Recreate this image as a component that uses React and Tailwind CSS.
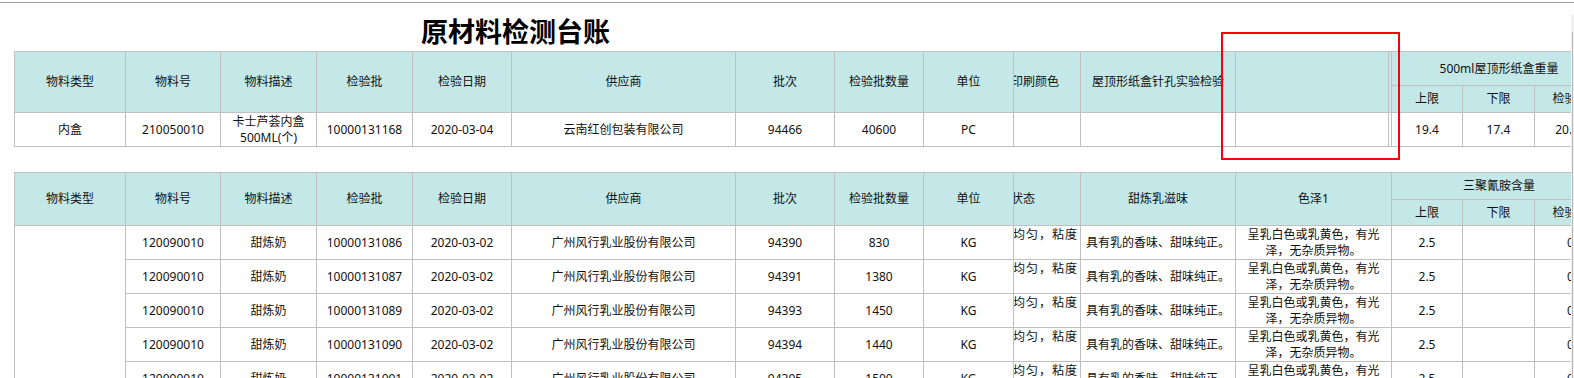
import React from "react";

const B = "border border-[#c0c0c0]";
const TH = `${B} bg-[#c4e8e8] font-normal text-center align-middle px-[4px]`;
const TD = `${B} bg-white text-center align-middle px-[4px]`;

const cols1 = ["w-[111px]", "w-[95px]", "w-[96px]", "w-[96px]", "w-[99px]", "w-[224px]", "w-[99px]", "w-[89px]", "w-[90px]", "w-[67px]", "w-[155px]", "w-[153px]", "w-[3px]", "w-[71px]", "w-[72px]", "w-[72px]"];
const cols2 = ["w-[111px]", "w-[95px]", "w-[96px]", "w-[96px]", "w-[99px]", "w-[224px]", "w-[99px]", "w-[89px]", "w-[90px]", "w-[67px]", "w-[155px]", "w-[156px]", "w-[71px]", "w-[72px]", "w-[72px]"];

const rows2 = [
  ["10000131086", "94390", "830"],
  ["10000131087", "94391", "1380"],
  ["10000131089", "94393", "1450"],
  ["10000131090", "94394", "1440"],
  ["10000131091", "94395", "1500"],
];

export default function App() {
  return (
    <div className="relative w-[1574px] h-[378px] overflow-hidden bg-white text-[12px] leading-[16px] text-[#111] font-['Noto_Sans','Noto_Sans_CJK_SC',sans-serif]">
      <div className="mt-[2px] border-t border-[#9f9f9f]" />
      <div className="w-[1571px] overflow-hidden">
        <div className="pt-[11px] mb-[3px] pl-[421px] text-[27px] leading-[34px] font-bold text-black whitespace-nowrap font-['Noto_Sans_CJK_SC',sans-serif]">
          原材料检测台账
        </div>

        <table className="ml-[14px] table-fixed border-collapse w-[1592px]">
          <colgroup>
            {cols1.map((c, i) => (
              <col key={i} className={c} />
            ))}
          </colgroup>
          <thead>
            <tr className="h-[34px]">
              <th rowSpan={2} className={TH}>物料类型</th>
              <th rowSpan={2} className={TH}>物料号</th>
              <th rowSpan={2} className={TH}>物料描述</th>
              <th rowSpan={2} className={TH}>检验批</th>
              <th rowSpan={2} className={TH}>检验日期</th>
              <th rowSpan={2} className={TH}>供应商</th>
              <th rowSpan={2} className={TH}>批次</th>
              <th rowSpan={2} className={TH}>检验批数量</th>
              <th rowSpan={2} className={TH}>单位</th>
              <th rowSpan={2} className={`${B} bg-[#c4e8e8] font-normal align-middle p-0`}>
                <div className="overflow-hidden whitespace-nowrap text-left">
                  <span className="inline-block ml-[-3px]">印刷颜色</span>
                </div>
              </th>
              <th rowSpan={2} className={TH}>屋顶形纸盒针孔实验检验</th>
              <th rowSpan={2} className={TH}></th>
              <th rowSpan={2} className={`${B} bg-[#c4e8e8] p-0`}></th>
              <th colSpan={3} className={TH}>500ml屋顶形纸盒重量</th>
            </tr>
            <tr className="h-[27px]">
              <th className={TH}>上限</th>
              <th className={TH}>下限</th>
              <th className={TH}>检验值</th>
            </tr>
          </thead>
          <tbody>
            <tr className="h-[34px]">
              <td className={TD}>内盒</td>
              <td className={TD}>210050010</td>
              <td className={TD}>卡士芦荟内盒500ML(个)</td>
              <td className={TD}>10000131168</td>
              <td className={TD}>2020-03-04</td>
              <td className={TD}>云南红创包装有限公司</td>
              <td className={TD}>94466</td>
              <td className={TD}>40600</td>
              <td className={TD}>PC</td>
              <td className={TD}></td>
              <td className={TD}></td>
              <td className={TD}></td>
              <td className={`${B} p-0`}></td>
              <td className={TD}>19.4</td>
              <td className={TD}>17.4</td>
              <td className={`${TD} whitespace-nowrap`}>20.15</td>
            </tr>
          </tbody>
        </table>

        <table className="ml-[14px] mt-[25px] table-fixed border-collapse w-[1592px]">
          <colgroup>
            {cols2.map((c, i) => (
              <col key={i} className={c} />
            ))}
          </colgroup>
          <thead>
            <tr className="h-[27px]">
              <th rowSpan={2} className={TH}>物料类型</th>
              <th rowSpan={2} className={TH}>物料号</th>
              <th rowSpan={2} className={TH}>物料描述</th>
              <th rowSpan={2} className={TH}>检验批</th>
              <th rowSpan={2} className={TH}>检验日期</th>
              <th rowSpan={2} className={TH}>供应商</th>
              <th rowSpan={2} className={TH}>批次</th>
              <th rowSpan={2} className={TH}>检验批数量</th>
              <th rowSpan={2} className={TH}>单位</th>
              <th rowSpan={2} className={`${B} bg-[#c4e8e8] font-normal align-middle p-0`}>
                <div className="overflow-hidden whitespace-nowrap text-left">
                  <span className="inline-block ml-[-27px]">组织状态</span>
                </div>
              </th>
              <th rowSpan={2} className={TH}>甜炼乳滋味</th>
              <th rowSpan={2} className={TH}>色泽1</th>
              <th colSpan={3} className={TH}>三聚氰胺含量</th>
            </tr>
            <tr className="h-[26px]">
              <th className={TH}>上限</th>
              <th className={TH}>下限</th>
              <th className={TH}>检验值</th>
            </tr>
          </thead>
          <tbody>
            {rows2.map((r, i) => (
              <tr key={i} className="h-[34px]">
                {i === 0 && <td rowSpan={5} className={TD}></td>}
                <td className={TD}>120090010</td>
                <td className={TD}>甜炼奶</td>
                <td className={TD}>{r[0]}</td>
                <td className={TD}>2020-03-02</td>
                <td className={TD}>广州风行乳业股份有限公司</td>
                <td className={TD}>{r[1]}</td>
                <td className={TD}>{r[2]}</td>
                <td className={TD}>KG</td>
                <td className={`${B} bg-white align-top p-0`}>
                  <div className="flex justify-end overflow-hidden whitespace-nowrap pt-[1px] pr-[2px] tracking-[1px]">
                    <span>状态均匀，粘度</span>
                  </div>
                </td>
                <td className={TD}>具有乳的香味、甜味纯正。</td>
                <td className={`${B} bg-white text-center align-middle px-[8px]`}>
                  呈乳白色或乳黄色，有光泽，无杂质异物。
                </td>
                <td className={TD}>2.5</td>
                <td className={TD}></td>
                <td className={TD}>0</td>
              </tr>
            ))}
          </tbody>
        </table>
      </div>

      <div className="absolute right-0 top-[14px] bottom-0 w-[3px] bg-[#f0f0f0]">
        <div className="absolute left-[1px] top-[18px] bottom-0 w-[1px] bg-[#b8b8b8]" />
      </div>

      <div className="absolute left-[1221px] top-[32px] w-[179px] h-[128px] border-2 border-[#ff0000]" />
    </div>
  );
}
